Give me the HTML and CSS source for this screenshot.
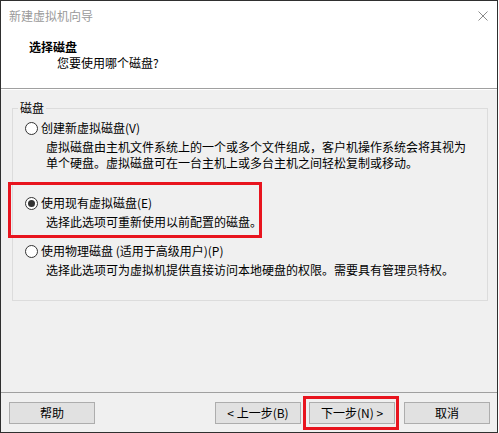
FILE: index.html
```html
<!DOCTYPE html>
<html lang="zh-CN">
<head>
<meta charset="utf-8">
<title>新建虚拟机向导</title>
<link rel="stylesheet" href="styles.css">
</head>
<body>
<div class="window">
  <div class="titlebar">
    <span class="title">新建虚拟机向导</span>
    <svg class="close" width="10" height="10" viewBox="0 0 10 10"><path d="M0.5 0.5 L9.5 9.5 M9.5 0.5 L0.5 9.5" stroke="#8a8a8a" stroke-width="1" fill="none"/></svg>
  </div>
  <div class="header">
    <div class="h1">选择磁盘</div>
    <div class="sub">您要使用哪个磁盘?</div>
  </div>
  <div class="body">
    <fieldset class="group">
      <legend>磁盘</legend>
      <div class="option">
        <label class="row"><input type="radio" name="disk" class="radio"><span>创建新虚拟磁盘(V)</span></label>
        <p class="desc">虚拟磁盘由主机文件系统上的一个或多个文件组成，客户机操作系统会将其视为<br>单个硬盘。虚拟磁盘可在一台主机上或多台主机之间轻松复制或移动。</p>
      </div>
      <div class="option opt2">
        <span class="mark mark-opt"></span>
        <label class="row"><input type="radio" name="disk" class="radio" checked><span>使用现有虚拟磁盘(E)</span></label>
        <p class="desc">选择此选项可重新使用以前配置的磁盘。</p>
      </div>
      <div class="option opt3">
        <label class="row"><input type="radio" name="disk" class="radio"><span>使用物理磁盘 (适用于高级用户)(P)</span></label>
        <p class="desc">选择此选项可为虚拟机提供直接访问本地硬盘的权限。需要具有管理员特权。</p>
      </div>
    </fieldset>
  </div>
  <div class="footer">
    <button class="btn">帮助</button>
    <div class="spacer"></div>
    <button class="btn">&lt; 上一步(B)</button>
    <button class="btn next"><span class="mark mark-btn"></span>下一步(N) &gt;</button>
    <button class="btn cancel">取消</button>
  </div>
</div>
</body>
</html>
```

FILE: styles.css
```css
* { box-sizing: border-box; }
html, body { margin: 0; padding: 0; background: #ffffff; }
body {
  font-family: "Noto Sans CJK SC", "Microsoft YaHei", sans-serif;
  font-size: 12px;
  color: #000;
}
.window {
  width: 498px;
  height: 433px;
  border: 1px solid #2f2f2f;
  display: flex;
  flex-direction: column;
  background: #f0f0f0;
}
.titlebar {
  height: 30px;
  background: #fff;
  display: flex;
  align-items: center;
  justify-content: space-between;
  padding: 0 9px 0 8px;
}
.title { color: #9a9a9a; line-height: 16px; }
.close { display: block; margin-right: 0; }
.header {
  background: #fff;
  height: 58px;
  padding: 7px 0 0 0;
  border-bottom: 1px solid #a0a0a0;
  box-shadow: 0 1px 0 #ffffff;
}
.h1 { font-weight: bold; line-height: 17px; padding-left: 28px; }
.sub { line-height: 16px; padding-left: 56px; }
.body { flex: 1; padding: 13px 9px 0 11px; }
.group {
  margin: 0;
  border: 1px solid #dcdcdc;
  padding: 6px 12px 22px 12px;
  min-width: 0;
}
.group legend {
  margin-left: -7px;
  padding: 0 2px;
  line-height: 12px;
}
.option { position: relative; }
.row {
  display: flex;
  align-items: center;
  gap: 3px;
  line-height: 16px;
  height: 16px;
}
.radio {
  appearance: none;
  -webkit-appearance: none;
  width: 13px;
  height: 13px;
  margin: 0;
  border: 1px solid #333;
  border-radius: 50%;
  background: #fff;
  display: grid;
  place-content: center;
  flex: none;
}
.radio:checked::before {
  content: "";
  width: 7px;
  height: 7px;
  border-radius: 50%;
  background: #333;
}
.desc {
  margin: 3px 0 0 21px;
  line-height: 16px;
}
.opt2 { margin-top: 24px; }
.opt3 { margin-top: 13px; }
.mark {
  position: absolute;
  border: 3px solid #e8141e;
  pointer-events: none;
}
.mark-opt { left: -17px; top: -13px; width: 254px; height: 56px; }
.footer {
  height: 40px;
  border-top: 1px solid #a0a0a0;
  display: flex;
  align-items: flex-start;
  padding: 9px 7px 0 8px;
  gap: 8px;
}
.spacer { flex: 1; }
.btn {
  position: relative;
  width: 86px;
  height: 22px;
  background: #e1e1e1;
  border: 1px solid #adadad;
  font-family: inherit;
  font-size: 12px;
  color: #000;
  padding: 0;
  line-height: 20px;
}
.cancel { margin-left: 1px; }
.mark-btn { left: -7px; top: -7px; width: 96px; height: 34px; }
```
